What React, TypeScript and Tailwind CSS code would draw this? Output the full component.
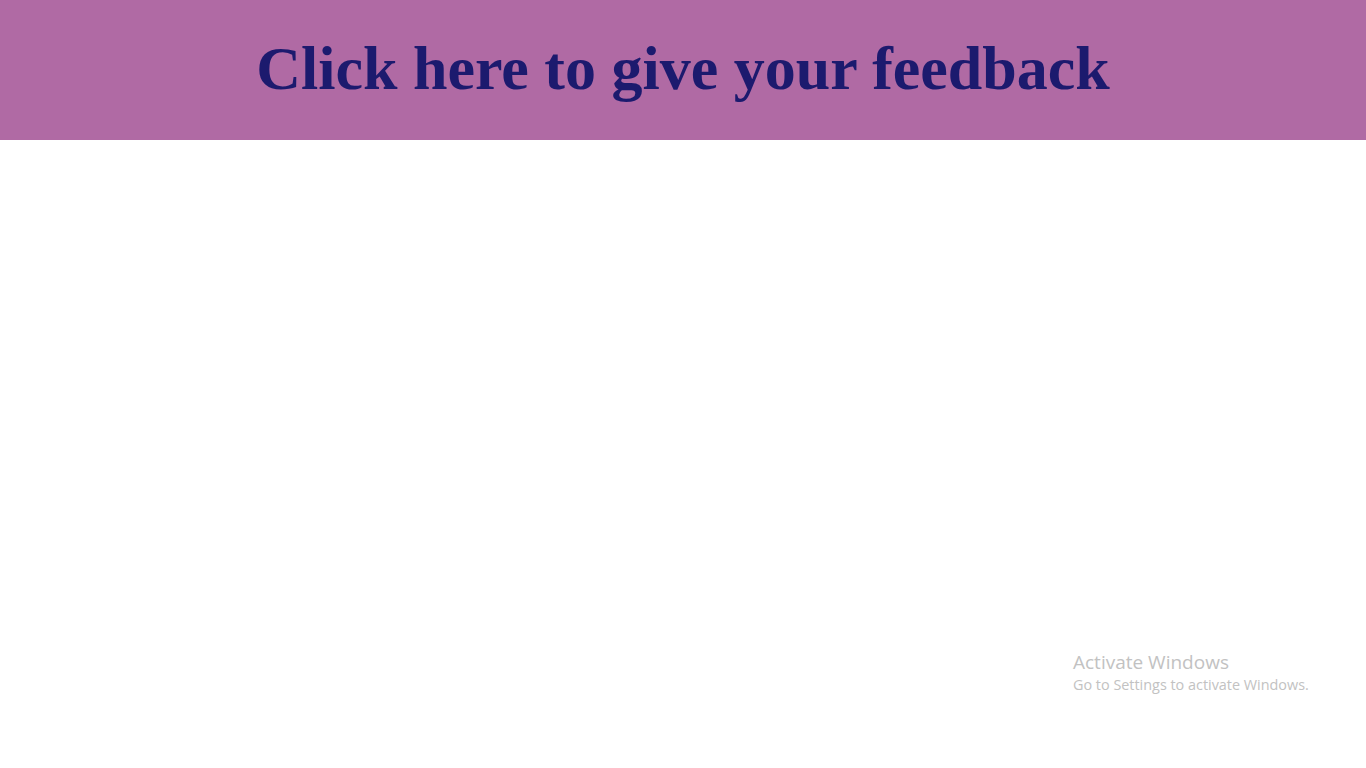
import React from "react";

const App = () => {
    return (
        <div className="min-h-screen w-full bg-white relative">
            {/* Feedback banner */}
            <a
                href="#"
                className="flex h-[140px] w-full items-center justify-center bg-[#b06aa4] no-underline"
            >
                <h1
                    className="text-[62px] font-bold leading-none text-[#1c1a6e] pb-[4px]"
                    style={{ fontFamily: '"Liberation Serif", serif' }}
                >
                    Click here to give your feedback
                </h1>
            </a>

            {/* Windows watermark */}
            <div
                className="absolute left-[1073px] top-[650px] text-[#c2c2c2]"
                style={{ fontFamily: '"Open Sans", sans-serif' }}
            >
                <div className="text-[19px] leading-[24px]">Activate Windows</div>
                <div className="text-[14.4px] leading-[21px]">Go to Settings to activate Windows.</div>
            </div>
        </div>
    );
};

export default App;
